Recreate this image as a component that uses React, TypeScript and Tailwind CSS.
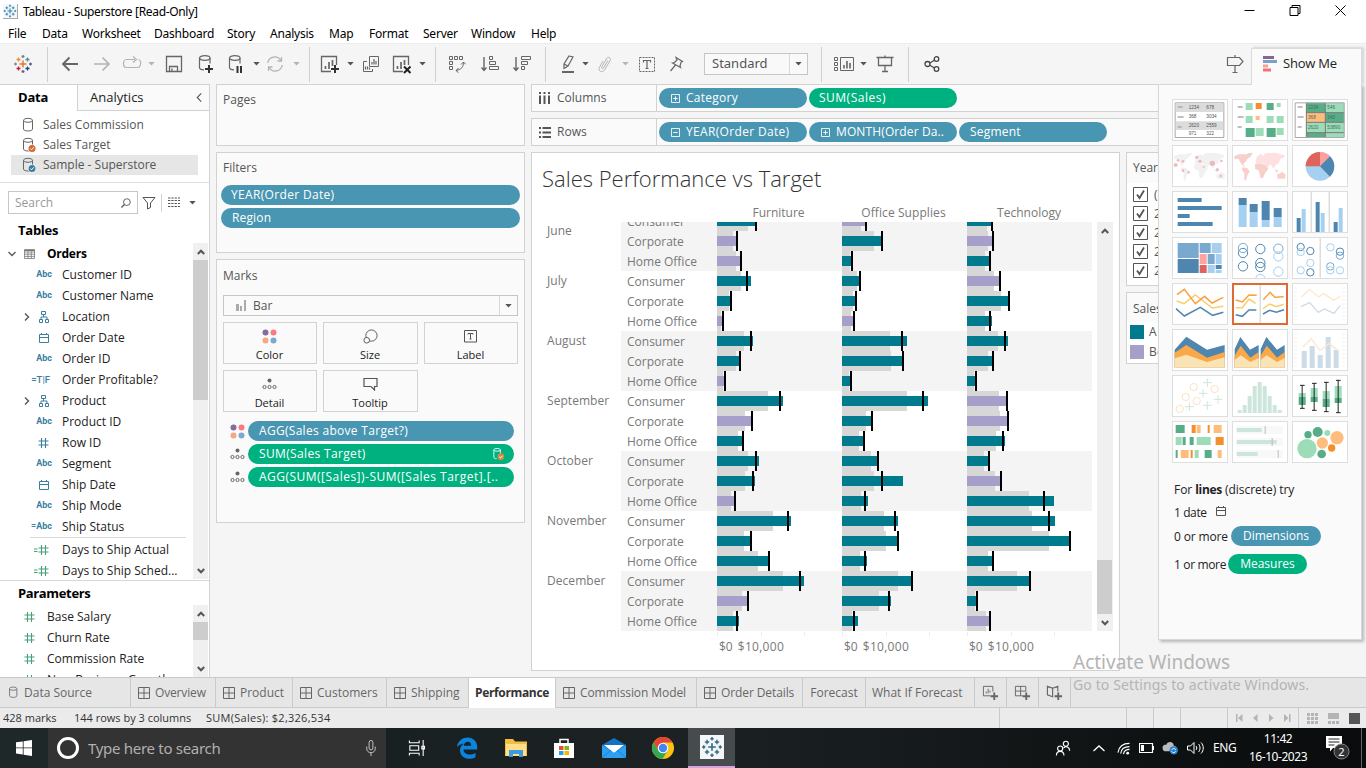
import React from "react";

const CARET = "M0 0h8l-4 4.5z";

function Caret({ className = "" }: { className?: string }) {
  return (
    <svg viewBox="0 0 8 5" className={`h-[4px] w-[7px] shrink-0 ${className}`}>
      <path d={CARET} fill="currentColor" />
    </svg>
  );
}

function TableauLogo({ className = "", mono }: { className?: string; mono?: string }) {
  const c = (x: string) => mono ?? x;
  return (
    <svg viewBox="0 0 20 20" className={className} fill="none" strokeWidth="1.3">
      <path d="M10 6.5v7M6.5 10h7" stroke={c("#e8762c")} strokeWidth="1.5" />
      <path d="M5.5 3.5v4M3.5 5.5h4" stroke={c("#eb912c")} />
      <path d="M14.5 3.5v4M12.5 5.5h4" stroke={c("#59879b")} />
      <path d="M5.5 12.5v4M3.5 14.5h4" stroke={c("#c72035")} />
      <path d="M14.5 12.5v4M12.5 14.5h4" stroke={c("#1f447e")} />
      <path d="M10 1v3M8.5 2.5h3" stroke={c("#5b879b")} />
      <path d="M10 16v3M8.5 17.5h3" stroke={c("#5c6692")} />
      <path d="M2.5 8.5v3M1 10h3" stroke={c("#7199a6")} />
      <path d="M17.5 8.5v3M16 10h3" stroke={c("#5c6692")} />
    </svg>
  );
}

function Cylinder({ className = "", badge }: { className?: string; badge?: string }) {
  return (
    <svg viewBox="0 0 14 16" className={className} fill="none">
      <path d="M1.5 3.5v8.6c0 1.1 2 1.9 4.5 1.9s4.500-.8 4.500-1.900V3.500" stroke="#666" />
      <ellipse cx="6" cy="3.300" rx="4.500" ry="2" stroke="#666" />
      {badge && (
        <g>
          <circle cx="10" cy="11.500" r="4" fill="#fff" />
          <circle cx="10" cy="11.500" r="3.500" fill={badge} />
          <path d="M8.300 11.500l1.300 1.300 2.200-2.500" stroke="#fff" />
        </g>
      )}
    </svg>
  );
}

/* ---------- title bar, menu and toolbar ---------- */

function TitleBar() {
  return (
    <div className="flex h-[22px] shrink-0 items-center bg-white">
      <div className="ml-[3px] flex h-[15px] w-[15px] items-center justify-center border-r border-b border-[#aaa] bg-[#f4f8fa]">
        <TableauLogo className="h-[14px] w-[14px]" mono="#2f80a8" />
      </div>
      <span className="ml-[5px] pt-[2px] text-[12px] tracking-[-0.33px] whitespace-pre text-black">Tableau - Superstore [Read-Only]</span>
      <svg viewBox="0 0 110 14" className="ml-auto mr-[17px] h-[14px] w-[110px]" fill="none" stroke="#000">
        <path d="M5.500 6.500h10" />
        <path d="M51 3.500h8v8h-8zM53 3.500v-2h8v8h-2" />
        <path d="M96.500 1.500l10 10M106.500 1.500l-10 10" />
      </svg>
    </div>
  );
}

function MenuBar() {
  return (
    <div className="flex h-[21px] shrink-0 items-center bg-white pt-[2px] pl-[8px] text-[12px] tracking-[-0.22px] text-black">
      <span className="w-[34px]">File</span>
      <span className="w-[40px]">Data</span>
      <span className="w-[72px]">Worksheet</span>
      <span className="w-[73px]">Dashboard</span>
      <span className="w-[43px]">Story</span>
      <span className="w-[59px]">Analysis</span>
      <span className="w-[40px]">Map</span>
      <span className="w-[54px]">Format</span>
      <span className="w-[48px]">Server</span>
      <span className="w-[60px]">Window</span>
      <span>Help</span>
    </div>
  );
}

function Sep({ className = "" }: { className?: string }) {
  return <div className={`h-[35px] w-px shrink-0 bg-[#d0d0d0] ${className}`} />;
}

function Ico({ className, box = "0 0 18 18", children }: { className: string; box?: string; children: React.ReactNode }) {
  return (
    <svg viewBox={box} className={`shrink-0 ${className}`} fill="none" stroke="#666" strokeWidth="1">
      {children}
    </svg>
  );
}

function Toolbar() {
  return (
    <div className="flex h-[41px] shrink-0 items-center border-t border-[#ececec] bg-[#f5f5f5]">
      <TableauLogo className="ml-[13px] h-[20px] w-[20px] shrink-0" />
      <Sep className="ml-[14px]" />
      <Ico className="ml-[13px] h-[18px] w-[18px]"><path d="M17 9H2M8.500 2.500L2 9l6.500 6.500" strokeWidth="1.900" /></Ico>
      <Ico className="ml-[14px] h-[18px] w-[18px]"><path d="M1 9h15M9.500 2.500L16 9l-6.500 6.500" stroke="#b4b4b4" strokeWidth="1.700" /></Ico>
      <Ico className="ml-[11px] h-[18px] w-[20px]" box="0 0 20 18"><path d="M13 4.500H4.500c-4 0-4 8 0 8h11c4 0 4-8 1-8M11 1.500l3.500 3-3.500 3" stroke="#b4b4b4" strokeWidth="1.200" /></Ico>
      <Caret className="ml-[6px] text-[#b4b4b4]" />
      <Ico className="ml-[10px] h-[18px] w-[18px]"><path d="M1.500 1.500h15v15h-15zM4.500 16.500v-5h8v5M7 13.500v3" strokeWidth="1.300" /></Ico>
      <Ico className="ml-[14px] h-[20px] w-[18px]" box="0 0 18 20">
        <path d="M2.500 4v9.500c0 1.500 2 2.300 4.500 2.300M13 9.500V4" strokeWidth="1.200" />
        <ellipse cx="7.750" cy="4" rx="5.250" ry="2.300" strokeWidth="1.200" />
        <path d="M12 11v8M8 15h8" stroke="#333" strokeWidth="2" />
      </Ico>
      <Ico className="ml-[12px] h-[20px] w-[18px]" box="0 0 18 20">
        <path d="M2.500 4v9.500c0 1.500 2 2.300 4.500 2.300M13 9.500V4" strokeWidth="1.200" />
        <ellipse cx="7.750" cy="4" rx="5.250" ry="2.300" strokeWidth="1.200" />
        <path d="M10.500 12v7M14 12v7" stroke="#333" strokeWidth="2" />
      </Ico>
      <Caret className="ml-[8px] text-[#555]" />
      <Ico className="ml-[6px] h-[18px] w-[18px]">
        <path d="M1.800 8a7 7 0 0 1 13-2.500M16.200 10a7 7 0 0 1-13 2.500M15.500 2v4h-4M2.500 16v-4h4" stroke="#b4b4b4" strokeWidth="1.300" />
      </Ico>
      <Caret className="ml-[9px] text-[#b4b4b4]" />
      <Sep className="ml-[9px]" />
      <Ico className="ml-[10px] h-[20px] w-[20px]" box="0 0 20 20">
        <path d="M11 17.500H1.500v-15h15V11" strokeWidth="1.300" />
        <path d="M5.500 15v-3M9 15V8M12.500 12V6" strokeWidth="1.700" />
        <path d="M15 11v8M11 15h8" stroke="#333" strokeWidth="2" />
      </Ico>
      <Caret className="ml-[7px] text-[#555]" />
      <Ico className="ml-[8px] h-[18px] w-[18px]">
        <path d="M7.500 1.500h9v10h-9zM5 6.500H1.500v10h9V14" />
        <path d="M10 9.500V7M12 9.500V4M14 9.500V6M3.500 14.500v-3M5.500 14.500v-3M7.500 14.500v-2" strokeWidth="1.200" />
      </Ico>
      <Ico className="ml-[12px] h-[20px] w-[20px]" box="0 0 20 20">
        <path d="M11 17.500H1.500v-15h15V11" strokeWidth="1.300" />
        <path d="M5.500 15v-3M9 15V8M12.500 11V6" strokeWidth="1.700" />
        <path d="M12 12.500l6.500 6.500M18.500 12.500L12 19" stroke="#222" strokeWidth="2" />
      </Ico>
      <Caret className="ml-[7px] text-[#555]" />
      <Sep className="ml-[9px]" />
      <Ico className="ml-[12px] h-[18px] w-[18px]">
        <path d="M1.500 1.500h3v3h-3zM6.500 1.500h3v3h-3zM11.500 1.500h3v3h-3zM1.500 6.500h3v3h-3zM1.500 11.500h3v3h-3z" />
        <path d="M15.500 7c0 5-2 7.500-7.500 8.500M13 9.500L15.500 7 18 9.500M10.500 13L8 15.500l2.500 2.300" />
      </Ico>
      <Ico className="ml-[15px] h-[18px] w-[18px]">
        <path d="M3 2v13M.5 12.500L3 15.500l2.500-3" strokeWidth="1.400" />
        <path d="M8.500 1.500h3v3h-3zM8.500 6.500h6v3h-6zM8.500 11.500h9v3h-9z" />
      </Ico>
      <Ico className="ml-[14px] h-[18px] w-[18px]">
        <path d="M3 2v13M.5 12.500L3 15.500l2.500-3" strokeWidth="1.400" />
        <path d="M8.500 1.500h9v3h-9zM8.500 6.500h6v3h-6zM8.500 11.500h3v3h-3z" />
      </Ico>
      <Sep className="ml-[14px]" />
      <Ico className="ml-[14px] h-[20px] w-[16px]" box="0 0 16 20">
        <path d="M9 2l4 1-5 9-4 2.500V10zM4 10l4 2" strokeWidth="1.200" />
        <path d="M2 18h12" strokeWidth="2" />
      </Ico>
      <Caret className="ml-[6px] text-[#555]" />
      <Ico className="ml-[8px] h-[18px] w-[16px]" box="0 0 16 18">
        <path d="M11 5.500L6.500 13c-.8 1.300-2.500.5-1.800-.9l5-8.600c1.500-2.500 4.800-.5 3.500 1.900L7.500 15c-2.500 3.500-7 1-5-2.800L6 6" stroke="#b4b4b4" />
      </Ico>
      <Caret className="ml-[9px] text-[#b4b4b4]" />
      <Ico className="ml-[9px] h-[18px] w-[18px]">
        <path d="M1.500 2.500h15v14h-15z" strokeDasharray="2 1" />
        <path d="M5.500 7.500v-2h7v2M9 5.500v8M7.500 13.500h3" strokeWidth="1.200" />
      </Ico>
      <Ico className="ml-[13px] h-[18px] w-[16px]" box="0 0 16 18">
        <path d="M7 2.500l6.500 4-1.500.8-1 3.700.5 1.500L3.500 8l2-.5L8 5zM6.500 10L1.500 16" strokeWidth="1.200" />
      </Ico>
      <div className="ml-[19px] flex h-[22px] w-[104px] shrink-0 items-center border border-[#c6c6c6] bg-[#f9f9f9] text-[13px] text-[#555]">
        <span className="flex-1 pl-[7px] font-['Noto_Sans']">Standard</span>
        <span className="flex h-full w-[18px] items-center justify-center border-l border-[#d8d8d8]"><Caret className="text-[#555]" /></span>
      </div>
      <Sep className="ml-[13px]" />
      <Ico className="ml-[12px] h-[18px] w-[20px]" box="0 0 20 18">
        <path d="M.5 2.500h3v3h-3zM.5 7.500h3v3h-3zM.5 12.500h3v3h-3zM6.500 2.500h13v13h-13z" />
        <path d="M10 13.500V10M13 13.500V6M16 13.500V8" strokeWidth="1.600" />
      </Ico>
      <Caret className="ml-[6px] text-[#555]" />
      <Ico className="ml-[9px] h-[18px] w-[18px]">
        <path d="M.5 2.500h17M2.500 2.500v8h13v-8M9 10.500v6M6 16.500h6M9 .5v2" strokeWidth="1.300" />
      </Ico>
      <Sep className="ml-[14px]" />
      <Ico className="ml-[15px] h-[18px] w-[16px]" box="0 0 16 18">
        <circle cx="3.500" cy="9" r="2.500" strokeWidth="1.300" stroke="#444" />
        <circle cx="12.500" cy="4" r="2.300" strokeWidth="1.300" stroke="#444" />
        <circle cx="12.500" cy="14" r="2.300" strokeWidth="1.300" stroke="#444" />
        <path d="M5.800 8l4.600-2.700M5.800 10.200l4.600 2.700" strokeWidth="1.200" stroke="#444" />
      </Ico>
      <Ico className="ml-[286px] h-[20px] w-[18px]" box="0 0 18 20">
        <path d="M1.500 3.500h12l3.500 4-3.500 4h-12zM9 1v2.500M9 11.500v7M6.500 18.500h5" strokeWidth="1.200" />
      </Ico>
      <div className="relative z-20 -mb-[1px] ml-[7px] flex h-[37px] w-[111px] shrink-0 items-center self-end border border-b-0 border-[#dcdcdc] bg-[#fafafa] pb-[6px] shadow-[2px_-1px_2px_rgba(0,0,0,0.12)]">
        <svg viewBox="0 0 16 16" className="ml-[10px] h-[16px] w-[16px]">
          <path d="M1 0h11v3H1z" fill="#876694" />
          <path d="M1 4h14v3H1z" fill="#79a2cb" />
          <path d="M1 8.500h5v3H1z" fill="#f3a582" />
          <path d="M1 12.500h8v3H1z" fill="#f76c80" />
        </svg>
        <span className="ml-[5px] font-['Open_Sans'] text-[13px] tracking-[-0.2px] text-[#222]">Show Me</span>
      </div>
    </div>
  );
}

/* ---------- data pane ---------- */

type FieldKind = "abc" | "geo" | "date" | "tf" | "num" | "eqabc" | "eqnum";

function FieldIcon({ kind }: { kind: FieldKind }) {
  const blue = "#3a7f9f";
  const green = "#45a179";
  if (kind === "abc" || kind === "eqabc") {
    return (
      <span className="pt-[1px] font-['Roboto'] text-[9px] font-bold text-[#3a7f9f]">
        {kind === "eqabc" ? "=Abc" : "Abc"}
      </span>
    );
  }
  if (kind === "tf") return <span className="pt-[1px] pr-[2px] font-['Roboto'] text-[9.500px] font-medium text-[#3a7f9f]">=T|F</span>;
  if (kind === "geo") {
    return (
      <svg viewBox="0 0 12 12" className="mr-[2px] h-[12px] w-[12px] shrink-0" fill="none" stroke={blue}>
        <path d="M3.500.500h4v3h-4zM1.500 8.500h3v3h-3zM7.500 8.500h3v3h-3zM5.500 3.500V6M3 8.500V6h6v2.500" />
      </svg>
    );
  }
  if (kind === "date") {
    return (
      <svg viewBox="0 0 12 12" className="mr-[2px] h-[12px] w-[12px] shrink-0" fill="none" stroke={blue}>
        <path d="M1.500 2.500h9v8h-9zM1.500 5.500h9M3.500 1v1.500M8.500 1v1.500" />
      </svg>
    );
  }
  return <Hash eq={kind === "eqnum"} color={kind === "num" ? blue : green} />;
}

function Hash({ eq, color }: { eq?: boolean; color: string }) {
  return (
    <svg viewBox="0 0 15 12" className="mr-[3px] h-[12px] w-[15px] shrink-0" fill="none" stroke={color}>
      <path d="M7.500 1v10M11.500 1v10M4.500 4h10M4.500 8h10" strokeWidth="1.100" />
      {eq && <path d="M0 5h3.500M0 7.500h3.500" />}
    </svg>
  );
}

const FIELDS: { kind: FieldKind; name: string; open?: boolean }[] = [
  { kind: "abc", name: "Customer ID" },
  { kind: "abc", name: "Customer Name" },
  { kind: "geo", name: "Location", open: true },
  { kind: "date", name: "Order Date" },
  { kind: "abc", name: "Order ID" },
  { kind: "tf", name: "Order Profitable?" },
  { kind: "geo", name: "Product", open: true },
  { kind: "abc", name: "Product ID" },
  { kind: "num", name: "Row ID" },
  { kind: "abc", name: "Segment" },
  { kind: "date", name: "Ship Date" },
  { kind: "abc", name: "Ship Mode" },
  { kind: "eqabc", name: "Ship Status" },
];

function Field({ kind, name, open }: { kind: FieldKind; name: string; open?: boolean }) {
  return (
    <div className="flex h-[21px] items-center text-[12px] text-[#222]">
      <span className="flex w-[32px] justify-end pr-[2px]">
        {open && (
          <svg viewBox="0 0 6 8" className="h-[8px] w-[6px]" fill="none" stroke="#555" strokeWidth="1.400"><path d="M1 .5L4.500 4 1 7.500" /></svg>
        )}
      </span>
      <span className="flex w-[20px] items-center justify-end whitespace-nowrap"><FieldIcon kind={kind} /></span>
      <span className="pt-[1px] pl-[10px] whitespace-nowrap">{name}</span>
    </div>
  );
}

function Arrow({ up }: { up?: boolean }) {
  return (
    <svg viewBox="0 0 8 6" className="h-[6px] w-[8px]" fill="none" stroke="#555" strokeWidth="2">
      {up ? <path d="M.8 5L4 1.700 7.200 5" /> : <path d="M.8 1L4 4.300 7.200 1" />}
    </svg>
  );
}

function DataPane() {
  return (
    <div className="flex w-[210px] shrink-0 flex-col overflow-hidden border-t border-r border-[#d2d2d2] bg-white font-['Open_Sans']">
      <div className="flex h-[26px] shrink-0">
        <div className="flex w-[77px] items-center pl-[18px] text-[13px] font-bold tracking-[-0.2px] text-black">Data</div>
        <div className="flex flex-1 items-center border-b border-l border-[#d2d2d2] bg-[#fafafa] pl-[12px] text-[13px] text-[#222]">
          Analytics
          <svg viewBox="0 0 6 10" className="ml-auto mr-[7px] h-[9px] w-[6px]" fill="none" stroke="#555" strokeWidth="1.200"><path d="M5.500.5L1 5l4.500 4.500" /></svg>
        </div>
      </div>
      <div className="mt-[4px] flex h-[68px] shrink-0 flex-col border-b border-[#e0e0e0] text-[12px] text-[#555]">
        <div className="flex h-[20px] items-center pl-[22px]"><Cylinder className="h-[16px] w-[14px]" /><span className="ml-[7px]">Sales Commission</span></div>
        <div className="flex h-[20px] items-center pl-[22px]"><Cylinder className="h-[16px] w-[14px]" badge="#d5692f" /><span className="ml-[7px]">Sales Target</span></div>
        <div className="mr-[11px] ml-[11px] flex h-[20px] items-center bg-[#e6e6e6] pl-[11px]"><Cylinder className="h-[16px] w-[14px]" badge="#3a7f9f" /><span className="ml-[7px]">Sample - Superstore</span></div>
      </div>
      <div className="mt-[8px] flex h-[23px] shrink-0 items-center pl-[8px]">
        <div className="flex h-[23px] w-[130px] items-center border border-[#c6c6c6] pl-[6px] text-[12px] text-[#999]">
          Search
          <svg viewBox="0 0 11 11" className="ml-auto mr-[6px] h-[10px] w-[10px]" fill="none" stroke="#555"><circle cx="6.500" cy="4.500" r="3.700" /><path d="M3.800 7.200L.5 10.500" strokeWidth="1.400" /></svg>
        </div>
        <svg viewBox="0 0 14 14" className="ml-[4px] h-[14px] w-[14px]" fill="none" stroke="#555"><path d="M1 1.500h12L8.500 7v4.500l-3 1.500V7z" /></svg>
        <div className="ml-[5px] h-[18px] w-px bg-[#d2d2d2]" />
        <svg viewBox="0 0 12 11" className="ml-[6px] h-[11px] w-[12px]" fill="none" stroke="#555" strokeWidth="1.200"><path d="M0 1h12M0 3.500h12M0 6.500h12M0 9.500h12" strokeDasharray="2.300 1" /></svg>
        <Caret className="ml-[9px] text-[#555]" />
      </div>
      <div className="mt-[6px] h-[21px] shrink-0 pl-[18px] text-[13px] leading-[21px] font-bold tracking-[-0.25px] text-black">Tables</div>
      <div className="mt-[2px] flex h-[338px] shrink-0 overflow-hidden border-b border-[#d8d8d8]">
        <div className="w-[193px] shrink-0">
          <div className="flex h-[21px] items-center pl-[8px] text-[12px] font-bold tracking-[-0.25px] text-black">
            <svg viewBox="0 0 8 6" className="h-[6px] w-[8px]" fill="none" stroke="#555" strokeWidth="1.300"><path d="M.5 1L4 4.500 7.500 1" /></svg>
            <svg viewBox="0 0 11 10" className="ml-[8px] h-[10px] w-[11px]" fill="none" stroke="#777"><path d="M.5.500h10v9H.5zM.5 3h10M.5 5.200h10M.5 7.400h10M4 2.500v7M7.300 2.500v7" strokeWidth=".8" /><path d="M.5 1.500h10" /></svg>
            <span className="ml-[12px]">Orders</span>
          </div>
          {FIELDS.map((f) => (
            <Field key={f.name} {...f} />
          ))}
          <div className="ml-[30px] h-px w-[156px] bg-[#dadada]" />
          <div className="pt-[1px]">
            <Field kind="eqnum" name="Days to Ship Actual" />
            <Field kind="eqnum" name="Days to Ship Sched..." />
          </div>
        </div>
        <div className="flex h-[336px] w-[15px] flex-col items-center bg-[#f0f0f0]">
          <div className="flex h-[17px] items-center"><Arrow up /></div>
          <div className="h-[140px] w-full bg-[#cdcdcd]" />
          <div className="mt-auto flex h-[17px] items-center"><Arrow /></div>
        </div>
      </div>
      <div className="h-[24px] shrink-0 pl-[18px] text-[13px] leading-[24px] font-bold tracking-[-0.35px] text-black">Parameters</div>
      <div className="flex min-h-0 flex-1 overflow-hidden">
        <div className="w-[193px] shrink-0 pt-[1px] text-[12px] text-[#222]">
          {["Base Salary", "Churn Rate", "Commission Rate", "New Business Growth"].map((p) => (
            <div key={p} className="flex h-[21px] shrink-0 items-center pl-[20px]">
              <Hash color="#45a179" /><span className="ml-[9px]">{p}</span>
            </div>
          ))}
        </div>
        <div className="flex h-full w-[15px] flex-col items-center bg-[#f0f0f0]">
          <div className="flex h-[17px] items-center"><Arrow up /></div>
          <div className="h-[18px] w-full bg-[#cdcdcd]" />
          <div className="mt-auto flex h-[17px] items-center"><Arrow /></div>
        </div>
      </div>
    </div>
  );
}

/* ---------- cards ---------- */

function Pill({ text, green, className = "", icon }: { text: string; green?: boolean; className?: string; icon?: "plus" | "minus" }) {
  return (
    <div className={`flex h-[20px] items-center rounded-full text-[12px] whitespace-nowrap text-white ${green ? "bg-[#00b180]" : "bg-[#4996b2]"} ${className}`}>
      {icon && (
        <svg viewBox="0 0 10 10" className="mr-[6px] h-[9px] w-[9px]" fill="none" stroke="#fff">
          <path d="M.5.500h9v9h-9zM2.500 5h5" />
          {icon === "plus" && <path d="M5 2.500v5" />}
        </svg>
      )}
      {text}
    </div>
  );
}

function ColorDots() {
  return (
    <svg viewBox="0 0 15 15" className="h-[15px] w-[15px]">
      <circle cx="3.500" cy="3.500" r="3" fill="#876d9c" />
      <circle cx="11.500" cy="3.500" r="3" fill="#f77a85" />
      <circle cx="3.500" cy="11.500" r="3" fill="#f3a782" />
      <circle cx="11.500" cy="11.500" r="3" fill="#80a8cf" />
    </svg>
  );
}

function DetailDots() {
  return (
    <svg viewBox="0 0 15 12" className="h-[12px] w-[15px]" fill="none" stroke="#666">
      <circle cx="7.500" cy="2.500" r="2" fill="#666" stroke="none" />
      <circle cx="2.500" cy="9" r="1.600" />
      <circle cx="7.500" cy="9" r="1.600" />
      <circle cx="12.500" cy="9" r="1.600" />
    </svg>
  );
}

function MarkButton({ label, children }: { label: string; children: React.ReactNode }) {
  return (
    <div className="flex h-[42px] flex-col items-center border border-[#d2d2d2] pr-[1px] text-[11px] text-[#222]">
      <div className="flex h-[26px] items-center">{children}</div>
      <span className="leading-[12px]">{label}</span>
    </div>
  );
}

function Cards() {
  return (
    <div className="ml-[6px] flex w-[309px] shrink-0 flex-col gap-[6px] font-['Open_Sans'] text-[12px] text-[#555]">
      <div className="h-[62px] border border-[#d2d2d2] bg-[#fafafa] px-[6px] pt-[6px] leading-[17px]">Pages</div>
      <div className="h-[101px] border border-[#d2d2d2] bg-[#fafafa] px-[4px] pt-[6px]">
        <div className="px-[2px] leading-[17px]">Filters</div>
        <div className="mt-[9px] flex flex-col gap-[3px]">
          <Pill text="YEAR(Order Date)" className="pl-[10px] tracking-[0.33px]" />
          <Pill text="Region" className="pl-[11px] tracking-[0.15px]" />
        </div>
      </div>
      <div className="h-[264px] border border-[#d2d2d2] bg-[#fafafa] px-[6px] pt-[7px]">
        <div className="leading-[17px]">Marks</div>
        <div className="mt-[11px] flex h-[21px] items-center border border-[#c6c6c6]">
          <svg viewBox="0 0 12 12" className="ml-[11px] h-[12px] w-[12px]"><path d="M1 4h3v7H1zM5 6h2v5H5zM9 0h2v11H9z" fill="#aaa" /></svg>
          <span className="ml-[6px] text-[12px]">Bar</span>
          <span className="ml-auto flex h-full w-[18px] items-center justify-center border-l border-[#d8d8d8]"><Caret className="text-[#555]" /></span>
        </div>
        <div className="mt-[6px] grid grid-cols-[94px_95px_94px] gap-[6px]">
          <MarkButton label="Color"><ColorDots /></MarkButton>
          <MarkButton label="Size">
            <svg viewBox="0 0 16 16" className="h-[15px] w-[15px]" fill="none" stroke="#555"><circle cx="9" cy="7" r="6" /><circle cx="4" cy="12" r="3" fill="#fafafa" /></svg>
          </MarkButton>
          <MarkButton label="Label">
            <svg viewBox="0 0 13 13" className="h-[13px] w-[13px]" fill="none" stroke="#555"><path d="M.5.500h12v11.500H.5zM4 4.500V3.500h5v1M6.500 3.500v5.500M5.500 9h2" /></svg>
          </MarkButton>
          <MarkButton label="Detail"><DetailDots /></MarkButton>
          <MarkButton label="Tooltip">
            <svg viewBox="0 0 15 14" className="h-[14px] w-[15px]" fill="none" stroke="#555" strokeWidth="1.200"><path d="M1 1.500h13v8h-2.500v3.500L8 9.500H1z" /></svg>
          </MarkButton>
        </div>
        <div className="mt-[9px] flex flex-col gap-[3px] pr-[4px] pl-[7px]">
          <div className="flex items-center"><ColorDots /><Pill text="AGG(Sales above Target?)" className="ml-[3px] flex-1 pl-[11px] tracking-[0.3px]" /></div>
          <div className="flex items-center"><DetailDots />
            <div className="ml-[3px] flex h-[20px] flex-1 items-center rounded-full bg-[#00b180] pr-[9px] pl-[11px] tracking-[0.35px] text-white">
              SUM(Sales Target)
              <svg viewBox="0 0 14 15" className="ml-auto h-[14px] w-[13px]" fill="none" stroke="#dff"><path d="M2 3v8c0 1 1 1.500 3 1.600M9 7V3" /><ellipse cx="5.500" cy="3" rx="3.500" ry="1.500" /><circle cx="9.500" cy="10.500" r="3.700" fill="#cf8b45" stroke="none" /><path d="M7.800 10.500l1.400 1.300 2-2.300" stroke="#fff" /></svg>
            </div>
          </div>
          <div className="flex items-center"><DetailDots /><Pill green text="AGG(SUM([Sales])-SUM([Sales Target].[.." className="ml-[3px] flex-1 pl-[11px] tracking-[0.48px]" /></div>
        </div>
      </div>
    </div>
  );
}

/* ---------- worksheet view ---------- */

// Each mark: [bar length, target position, band length, below-target flag]
type Mark = [number, number, number, number];
const SEGMENTS = ["Consumer", "Corporate", "Home Office"];
const MONTHS: { name: string; rows: Mark[][] }[] = [
  { name: "June", rows: [
    [[39, 39, 31, 0], [24, 24, 19, 1], [25, 25, 20, 0]],
    [[20, 20, 16, 1], [40, 40, 32, 0], [26, 26, 21, 1]],
    [[24, 24, 19, 1], [10, 10, 8, 0], [23, 23, 18, 0]],
  ] },
  { name: "July", rows: [
    [[34, 30, 24, 0], [18, 18, 15, 0], [33, 33, 27, 1]],
    [[14, 14, 12, 0], [14, 14, 11, 0], [42, 42, 34, 0]],
    [[6, 6, 4, 1], [12, 12, 9, 1], [25, 23, 18, 0]],
  ] },
  { name: "August", rows: [
    [[36, 34, 27, 0], [65, 60, 48, 0], [41, 38, 31, 0]],
    [[23, 23, 19, 0], [61, 61, 49, 0], [26, 26, 21, 0]],
    [[8, 8, 6, 1], [9, 9, 7, 0], [9, 9, 7, 0]],
  ] },
  { name: "September", rows: [
    [[66, 63, 51, 0], [86, 81, 65, 0], [40, 40, 32, 1]],
    [[35, 35, 28, 1], [30, 30, 24, 0], [41, 41, 33, 1]],
    [[26, 26, 21, 0], [22, 22, 17, 0], [38, 36, 29, 0]],
  ] },
  { name: "October", rows: [
    [[42, 39, 31, 0], [36, 36, 29, 0], [22, 22, 17, 0]],
    [[38, 36, 28, 0], [61, 40, 32, 0], [34, 34, 28, 1]],
    [[18, 18, 14, 1], [26, 23, 19, 0], [87, 77, 62, 0]],
  ] },
  { name: "November", rows: [
    [[74, 71, 56, 0], [56, 53, 42, 0], [88, 82, 65, 0]],
    [[34, 34, 27, 0], [56, 56, 44, 0], [103, 103, 82, 0]],
    [[52, 52, 41, 0], [25, 23, 18, 0], [26, 26, 21, 0]],
  ] },
  { name: "December", rows: [
    [[87, 83, 66, 0], [70, 70, 56, 0], [63, 63, 50, 0]],
    [[31, 31, 25, 1], [49, 47, 37, 0], [10, 10, 8, 0]],
    [[22, 20, 16, 0], [16, 12, 10, 0], [23, 23, 19, 1]],
  ] },
];

function Chart() {
  return (
    <div className="flex flex-col">
      <div className="flex h-[29px] items-end pl-[184px] text-[12px] text-[#787878]">
        <span className="w-[125px] text-center leading-[19px]">Furniture</span>
        <span className="w-[125px] text-center leading-[19px] tracking-[0.08px]">Office Supplies</span>
        <span className="w-[125px] pl-[1px] text-center leading-[19px]">Technology</span>
      </div>
      <div className="flex h-[409px]">
        <div className="flex h-[409px] flex-col justify-end overflow-hidden text-[12px] text-[#787878]">
          {MONTHS.map((m, i) => (
            <div key={m.name} className="flex h-[60px] shrink-0">
              <div className={`w-[89px] pl-[15px] leading-[20px] tracking-[0.05px] ${i === 0 ? "pt-[10px]" : ""}`}>{m.name}</div>
              <div className={`w-[96px] pl-[6px] leading-[21px] ${i % 2 ? "bg-white" : "bg-[#f4f4f4]"}`}>
                {SEGMENTS.map((s) => (
                  <div key={s} className="h-[20px]">{s}</div>
                ))}
              </div>
              <svg viewBox="0 0 375 60" className={`h-[60px] w-[375px] ${i % 2 ? "bg-white" : "bg-[#f4f4f4]"}`} shapeRendering="crispEdges">
                {m.rows.map((row, r) =>
                  row.map(([bar, tick, band, below], c) => (
                    <g key={`${r}-${c}`} transform={`translate(${c * 125} ${r * 20})`}>
                      <rect width={band} height="20" fill="#d7d7d7" />
                      <rect y="5" width={bar} height="10" fill={below ? "#a59fca" : "#007b8e"} />
                      <rect x={tick - 1} width="2" height="20" fill="#000" />
                    </g>
                  ))
                )}
              </svg>
            </div>
          ))}
        </div>
        <div className="ml-[5px] flex h-[409px] w-[16px] flex-col items-center bg-[#f0f0f0]">
          <div className="flex h-[18px] items-center"><Arrow up /></div>
          <div className="mt-auto mr-[1px] h-[54px] w-[15px] bg-[#cdcdcd]" />
          <div className="flex h-[17px] items-center"><Arrow /></div>
        </div>
      </div>
      <div className="flex pl-[185px] text-[12px] text-[#787878]">
        {[0, 1, 2].map((i) => (
          <div key={i} className="w-[125px]">
            <svg viewBox="0 0 125 5" className="h-[5px] w-[125px]" stroke="#ececec"><path d="M.5 1v4M44.500 1v4M87.500 1v4" /></svg>
            <div className="pt-[1px] pl-[2px] leading-[20px] whitespace-pre"><span className="mr-[5px]">$0</span><span className="tracking-[0.3px]">$10,000</span></div>
          </div>
        ))}
      </div>
    </div>
  );
}

function Worksheet() {
  return (
    <div className="ml-[6px] w-[628px] shrink-0 overflow-hidden font-['Open_Sans'] text-[12px] text-[#555]">
      <div className="flex w-[640px] flex-col gap-[6px]">
        <div className="flex h-[28px] border border-[#d2d2d2] bg-[#fafafa]">
          <div className="flex w-[125px] items-center border-r border-[#d2d2d2] pl-[7px]">
            <svg viewBox="0 0 11 12" className="h-[12px] w-[11px]" stroke="#555" strokeWidth="2"><path d="M1 0v2M5.500 0v2M10 0v2M1 3.500V12M5.500 3.500V12M10 3.500V12" /></svg>
            <span className="ml-[7px]">Columns</span>
          </div>
          <div className="flex items-center gap-[2px] pl-[2px]">
            <Pill icon="plus" text="Category" className="w-[148px] pl-[12px] tracking-[0.25px]" />
            <Pill green text="SUM(Sales)" className="w-[148px] pl-[10px] tracking-[0.5px]" />
          </div>
        </div>
        <div className="flex h-[28px] border border-[#d2d2d2] bg-[#fafafa]">
          <div className="flex w-[125px] items-center border-r border-[#d2d2d2] pl-[7px]">
            <svg viewBox="0 0 12 11" className="h-[11px] w-[12px]" stroke="#555" strokeWidth="2"><path d="M0 1h2M0 5.500h2M0 10h2M3.500 1H12M3.500 5.500H12M3.500 10H12" /></svg>
            <span className="ml-[6px]">Rows</span>
          </div>
          <div className="flex items-center gap-[2px] pl-[2px]">
            <Pill icon="minus" text="YEAR(Order Date)" className="w-[148px] pl-[12px] tracking-[0.33px]" />
            <Pill icon="plus" text="MONTH(Order Da.." className="w-[148px] pl-[12px] tracking-[0.12px]" />
            <Pill text="Segment" className="w-[148px] pl-[11px] tracking-[0.2px]" />
          </div>
        </div>
        <div className="flex gap-[6px]">
          <div className="h-[519px] w-[589px] border border-[#d2d2d2] bg-white">
            <div className="h-[40px] pl-[10px] font-['Open_Sans'] text-[22px] leading-[51px] font-light text-[#333]">Sales Performance vs Target</div>
            <Chart />
          </div>
          <div className="flex w-[45px] flex-col gap-[6px] overflow-hidden whitespace-nowrap">
            <div className="h-[134px] w-[80px] border border-[#d2d2d2] bg-white">
              <div className="h-[30px] bg-[#fafafa] pl-[6px] leading-[30px]">Year of</div>
              <div className="flex flex-col gap-[4px] pt-[4px] pl-[6px]">
                {["(All)", "2020", "2021", "2022", "2023"].map((y) => (
                  <div key={y} className="flex h-[15px] items-center">
                    <svg viewBox="0 0 15 15" className="h-[15px] w-[15px]" fill="none" stroke="#555"><path d="M.5.500h14v14H.5z" /><path d="M4 7.500l2.500 3.500L11 3.500" strokeWidth="1.800" /></svg>
                    <span className="ml-[6px] tracking-[1px]">{y}</span>
                  </div>
                ))}
              </div>
            </div>
            <div className="h-[72px] w-[120px] border border-[#d2d2d2] bg-white">
              <div className="h-[29px] bg-[#fafafa] pl-[6px] leading-[31px]">Sales above</div>
              <div className="flex h-[20px] items-center pl-[3px] tracking-[0.8px]"><span className="mr-[5px] h-[14px] w-[14px] bg-[#007b8e]" />Above</div>
              <div className="flex h-[20px] items-center pl-[3px] tracking-[0.3px]"><span className="mr-[5px] h-[14px] w-[14px] bg-[#a59fca]" />Below</div>
            </div>
          </div>
        </div>
      </div>
    </div>
  );
}

/* ---------- show me panel ---------- */

const D = "#4f86b0";
const L = "#a5d0f0";
const G = "#56ad88";
const P = "#9ddcb8";
const O = "#f48f2b";
const Y = "#ffbd7d";

function Circles({ list, r = 14 }: { list: [number, number, string][]; r?: number }) {
  return (
    <g fill="none" strokeWidth="3">
      {list.map(([x, y, c], i) => (
        <circle key={i} cx={x} cy={y} r={r} stroke={c} />
      ))}
    </g>
  );
}

function Continents({ a, b }: { a: string; b: string }) {
  return (
    <g>
      <path d="M4 33l14-6 22 0 8-3 6 8-12 10-4 8-8 6 6 8-8-4-8-12-4-8-12 2z" fill={a} />
      <path d="M44 24l16-2-6 10-6 2z" fill={a} />
      <path d="M28 66l14 2 8 10-6 10-6 18-4-2 0-20-8-12z" fill={a} />
      <path d="M66 56l18-2 14 6 8 10-10 14-6 14-8 0-4-22-12-6z" fill={a} />
      <path d="M68 46l4-12 12-10 4 8 10-8 28-2 30 8-4 8-10 2-4 14-10 4-6 12-10-14-8 12-10-12-10-4-14 4z" fill={b} />
      <path d="M132 88l16-8 10 8-2 12-12 0-10 0z" fill={a} />
      <path d="M124 70l12 6-4 6z" fill={a} />
    </g>
  );
}

// Drawings use one shared sheet: columns start at 67, 247, 427; rows start at 27 and repeat every 138.
const DRAWINGS: React.ReactNode[] = [
  <g key="text">
    <path d="M76.500 38.500h146v104h-146z" fill="#fff" stroke="#a8a8a8" strokeWidth="3" />
    <path d="M78 40h143v26H78zM78 94h143v26H78z" fill="#dcdcdc" />
    <path d="M84 51h15M84 81h18M84 111h12" stroke="#aaa" strokeWidth="5" />
    <g fontSize="14" fill="#555" fontFamily="Liberation Sans">
      <text x="117" y="57">1234</text><text x="170" y="57">678</text>
      <text x="117" y="85">368</text><text x="170" y="85">3034</text>
      <text x="117" y="112">2620</text><text x="170" y="112">2559</text>
      <text x="117" y="136">971</text><text x="170" y="136">322</text>
    </g>
  </g>,
  <g key="heat">
    <path d="M264 51h15M264 81h18M264 111h12" stroke="#aaa" strokeWidth="5" />
    <path d="M288 39h21v21h-21zM381 39h12v12h-12zM288 78h21v21h-21zM351 78h21v21h-21zM381 78h21v21h-21zM318 114h24v24h-24zM381 114h21v21h-21z" fill={P} />
    <path d="M351 39h21v21h-21zM288 114h27v27h-27zM351 114h27v27h-27z" fill={G} />
    <path d="M318 39h18v18h-18z" fill={O} /><path d="M318 78h12v12h-12z" fill={Y} />
  </g>,
  <g key="highlight">
    <path d="M470 38h57v30h-57zM527 68h57v29h-57zM470 128h57v13h-57z" fill={G} />
    <path d="M527 38h57v30h-57zM470 97h114v31H470zM527 128h57v13h-57z" fill={P} />
    <path d="M470 68h57v29h-57z" fill={Y} />
    <path d="M470 38v103M527 38v103M470 68h114M470 97h114M470 128h114" stroke="#777" strokeWidth="3" />
    <path d="M436.500 38.500h147v104h-147z" fill="none" stroke="#a8a8a8" strokeWidth="3" />
    <path d="M444 51h15M444 81h18M444 111h12" stroke="#aaa" strokeWidth="5" />
    <g fontSize="14" fill="#4a6b5c" fontFamily="Liberation Sans">
      <text x="475" y="57">1234</text><text x="533" y="57">546</text><text x="475" y="87">368</text>
      <text x="533" y="87">340</text><text x="475" y="117">2620</text><text x="533" y="117">53890</text>
    </g>
  </g>,
  <g key="symbol">
    <g transform="translate(68 166)"><Continents a="#f1f1f1" b="#f1f1f1" /></g>
    <g fill="#edaeb0" opacity=".8"><circle cx="78" cy="225" r="6" /><circle cx="188" cy="220" r="8" /><circle cx="85" cy="211" r="4" /><circle cx="100" cy="214" r="4" /><circle cx="141" cy="202" r="5" /><circle cx="151" cy="214" r="5" /><circle cx="100" cy="242" r="4" /><circle cx="117" cy="247" r="4" /><circle cx="203" cy="239" r="5" /><circle cx="215" cy="213" r="4" /><circle cx="213" cy="258" r="4" /><circle cx="162" cy="231" r="3" /></g>
  </g>,
  <g key="map" transform="translate(250 166)"><Continents a="#f7cfcb" b="#ffe0e0" /></g>,
  <g key="pie">
    <circle cx="511" cy="229" r="43" fill={L} />
    <path d="M511 229V186a43 43 0 0 0-43 43z" fill="#e0625c" />
    <path d="M511 229V186a43 43 0 0 1 30 13z" fill="#ff9f9c" />
    <path d="M511 229l30-30a43 43 0 0 1 0 61z" fill={D} />
  </g>,
  <path key="hbar" d="M84 324h72v12H84zM84 348h132v12H84zM84 372h36v12H84zM84 396h105v12H84z" fill={D} />,
  <g key="stack">
    <path d="M267 345h24v66h-24zM300 366h24v45h-24zM336 390h24v21h-24zM372 381h24v30h-24z" fill={L} />
    <path d="M267 324h24v21h-24zM300 342h24v24h-24zM336 333h24v57h-24zM372 354h24v27h-24z" fill={D} />
  </g>,
  <g key="side">
    <path d="M484.500 306v120M538.500 306v120" stroke="#ccc" strokeWidth="3" />
    <path d="M441 384h12v42h-12zM498 336h12v90h-12zM552 396h12v30h-12z" fill={D} />
    <path d="M456 357h12v69h-12zM513 369h12v57h-12zM567 354h12v72h-12z" fill={L} />
  </g>,
  <g key="tree">
    <path d="M84 459h63v45H84zM150 459h33v30h-33zM174 492h21v30h-21z" fill="#7aa9d0" />
    <path d="M84 507h63v42H84zM198 525h18v12h-18z" fill={D} />
    <path d="M186 459h30v30h-30zM198 492h18v30h-18zM174 525h21v24h-21zM198 540h18v9h-18z" fill={L} />
    <path d="M150 492h21v30h-21z" fill="#ffa3a0" /><path d="M150 525h21v24h-21z" fill="#e0625c" />
  </g>,
  <Circles key="circ" list={[[280, 474, "#7aa9d0"], [280, 489, D], [280, 529, D], [332, 477, D], [332, 519, D], [332, 531, D], [332, 567, L], [386, 476, "#7aa9d0"], [386, 499, L], [386, 545, L]]} />,
  <g key="sidecirc">
    <path d="M511.500 445v118" stroke="#ccc" strokeWidth="3" />
    <Circles r={11} list={[[453, 471, D], [453, 486, L], [482, 483, D], [482, 519, L], [482, 547, D], [453, 541, L], [542, 472, L], [571, 485, D], [571, 497, "#7aa9d0"], [542, 529, "#7aa9d0"], [542, 541, L], [571, 541, L]]} />
  </g>,
  <g key="lines" fill="none" strokeWidth="4.500">
    <path d="M81 633l22 8 34-26 51 39 33-5" stroke="#f8ce6e" /><path d="M82 614l22-16 33 43 28-22 22 20 34-17" stroke="#fba23f" />
    <path d="M79 656l25 22 48-26 37 24 32-9" stroke={D} />
  </g>,
  <g key="dlines" fill="none" strokeWidth="4.500">
    <path d="M331.500 585v114" stroke="#ccc" strokeWidth="3" />
    <path d="M258 653l20 0 20-26 20 13M340 656l20-14 20 8 22-7" stroke="#f8ce6e" /><path d="M258 630l20 6 20-21 23 1M341 629l20-22 15 15 26-2" stroke="#fba23f" />
    <path d="M258 674l20 5 20-19 22 0M340 672l20-11 20 6 23-8" stroke={D} />
  </g>,
  <g key="dual" fill="none" strokeWidth="4">
    <path d="M455 622l25-24 26 23 16-10 30 20 20-12" stroke="#fde6cb" /><path d="M454 650l26-12 26 29 18-10 29 13 19-24" stroke="#cfdce8" />
    <path d="M438 593v97M582 593v97" stroke="#ddd" strokeWidth="8" strokeDasharray="2 10" />
  </g>,
  <g key="area">
    <path d="M75 779l35-39 62 39 53-14v68H75z" fill={D} /><path d="M75 788l35-23 62 38 53-17v47H75z" fill="#fba848" /><path d="M75 805l35-11 62 22 53-14v31H75z" fill="#fae3b5" />
  </g>,
  <g key="darea">
    <path d="M255 777l17-36 29 38 26-14v68h-72zM333 777l17-36 32 38 23-14v68h-72z" fill={D} />
    <path d="M255 797l18-30 29 36 25-17v47h-72zM333 797l18-30 31 36 23-17v47h-72z" fill="#fba848" />
    <path d="M255 810l18-14 29 20 25-12v29h-72zM333 810l18-14 31 20 23-12v29h-72z" fill="#fae3b5" />
  </g>,
  <g key="combo">
    <path d="M456 783h15v51h-15zM480 768h15v66h-15zM504 795h15v39h-15zM528 741h15v93h-15zM552 780h15v54h-15z" fill="#ccdbe8" />
    <path d="M460 771l25-25 26 36 27-21 28 21" stroke="#fde6cb" strokeWidth="4" fill="none" /><path d="M438 731v97M582 731v97" stroke="#ddd" strokeWidth="8" strokeDasharray="2 10" />
  </g>,
  <g key="scatter" fill="none" strokeWidth="3">
    <Circles r={11} list={[[132, 891, "#fde2c6"], [108, 921, "#fde2c6"], [141, 933, "#fde2c6"], [195, 897, "#fde2c6"], [90, 957, "#fde2c6"]]} />
    <path d="M160 878h26M173 865v26M147 910h26M160 897v26M192 928h26M205 915v26M106 950h26M119 937v26M160 946h26M173 933v26" stroke="#cce6dc" />
  </g>,
  <path key="histo" d="M264 960h12v9h-12zM279 945h12v24h-12zM294 918h12v51h-12zM309 888h12v81h-12zM324 876h12v93h-12zM339 888h12v81h-12zM354 918h12v51h-12zM369 945h12v24h-12zM384 960h12v9h-12z" fill="#cce6dc" />,
  <g key="box">
    <path d="M447 909h21v12h-21zM483 894h21v27h-21zM519 903h21v24h-21zM555 888h21v36h-21z" fill={P} />
    <path d="M447 921h21v24h-21zM483 921h21v15h-21zM519 927h21v24h-21zM555 924h21v15h-21z" fill={G} />
    <path d="M457.500 886v69M451 886h14M451 955h14M493.500 880v81M487 880h14M487 961h14M529.500 877v88M523 877h14M523 965h14M565.500 871v97M559 871h14M559 968h14" stroke="#222" strokeWidth="3" />
  </g>,
  <g key="gantt">
    <path d="M78 1005h27v24H78zM99 1041h9v24h-9zM120 1041h12v24h-12zM78 1080h6v24h-6zM165 1080h21v24h-21z" fill={G} />
    <path d="M78 1041h18v24H78zM141 1041h42v24h-42zM135 1080h12v24h-12z" fill={P} />
    <path d="M126 1005h12v24h-12zM174 1005h6v24h-6zM198 1041h24v24h-24zM123 1080h6v24h-6z" fill={O} />
    <path d="M141 1005h12v24h-12zM192 1005h24v24h-24zM93 1080h24v24h-24zM204 1080h12v24h-12z" fill={Y} />
  </g>,
  <g key="bullet">
    <path d="M261 1008h138v24H261zM261 1044h138v24H261zM261 1080h138v24H261z" fill="#f8f8f8" />
    <path d="M261 1014h75v12h-75zM261 1050h120v12H261zM261 1086h63v12h-63z" fill="#cce6dc" />
    <path d="M346.500 1008v24M367.500 1044v24M385.500 1080v24" stroke="#bbb" strokeWidth="3" />
  </g>,
  <g key="bubbles">
    <circle cx="472" cy="1076" r="29" fill={P} /><circle cx="475" cy="1034" r="11" fill={G} /><circle cx="504" cy="1026" r="15" fill={G} /><circle cx="533" cy="1029" r="9" fill={P} />
    <circle cx="562" cy="1043" r="20" fill={Y} /><circle cx="518" cy="1059" r="17" fill={Y} /><circle cx="546" cy="1074" r="11" fill={O} /><circle cx="516" cy="1092" r="13" fill={G} />
  </g>,
];

function ShowMe() {
  return (
    <div className="z-10 -ml-px h-[556px] w-[204px] shrink-0 border border-[#d8d8d8] bg-[#fafafa] pt-[14px] pl-[13px] font-['Open_Sans'] shadow-[2px_2px_3px_rgba(0,0,0,0.25)]">
      <div className="grid grid-cols-[56px_56px_56px] gap-[4px]">
        {DRAWINGS.map((d, i) => {
          const x = 70 + (i % 3) * 180;
          const y = 30 + Math.floor(i / 3) * 138;
          return (
            <div key={i} className={`h-[42px] bg-white ${i === 13 ? "border-2 border-[#dd6b35]" : "border border-[#dedede]"}`}>
              <svg viewBox={i === 13 ? "253 585 156 114" : `${x} ${y} 162 120`} className="h-full w-full">{d}</svg>
            </div>
          );
        })}
      </div>
      <div className="mt-[16px] pl-[2px] text-[12px] text-[#222]">
        <div className="h-[20px] leading-[21px] tracking-[-0.05px]">For <b className="tracking-[-0.3px]">lines</b> (discrete) try</div>
        <div className="mt-[4px] flex h-[20px] items-center tracking-[-0.4px]">
          1 date
          <svg viewBox="0 0 12 12" className="mb-[4px] ml-[8px] h-[12px] w-[12px]" fill="none" stroke="#555"><path d="M1.500 2.500h9v8h-9zM1.500 5.500h9M3.500 1v1.500M8.500 1v1.500" /></svg>
        </div>
        <div className="mt-[2px] flex h-[22px] items-center whitespace-nowrap"><span className="w-[57px] pt-[2px] tracking-[-0.15px]">0 or more</span><Pill text="Dimensions" className="-mt-[1px] w-[90px] justify-center" /></div>
        <div className="mt-[6px] flex h-[22px] items-center whitespace-nowrap"><span className="w-[54px] pt-[2px] tracking-[-0.35px]">1 or more</span><Pill green text="Measures" className="-mt-[1px] w-[79px] justify-center" /></div>
      </div>
    </div>
  );
}

/* ---------- sheet tabs and status bar ---------- */

function SheetTab({ name, className, icon = true }: { name: string; className: string; icon?: boolean }) {
  return (
    <div className={`flex shrink-0 items-center border-r border-[#cacaca] whitespace-nowrap ${className}`}>
      {icon && (
        <svg viewBox="0 0 12 12" className="mr-[5px] ml-[7px] h-[12px] w-[12px]" fill="none" stroke="#666"><path d="M.5.500h11v11H.5zM6 .5v11M.5 6h11" /></svg>
      )}
      {name}
    </div>
  );
}

function PlusBadge() {
  return <path d="M13 9v8M9 13h8" strokeWidth="2" />;
}

function SheetTabs() {
  return (
    <div className="z-10 flex h-[31px] shrink-0 border-t border-b border-[#cacaca] bg-[#e6e6e6] font-['Open_Sans'] text-[12px] text-[#666]">
      <div className="flex w-[131px] shrink-0 items-center border-r border-[#cacaca] pl-[8px]">
        <Cylinder className="h-[13px] w-[12px]" /><span className="ml-[4px]">Data Source</span>
      </div>
      <SheetTab name="Overview" className="w-[85px] tracking-[-0.15px]" />
      <SheetTab name="Product" className="w-[77px]" />
      <SheetTab name="Customers" className="w-[94px]" />
      <SheetTab name="Shipping" className="w-[82px]" />
      <div className="flex h-[30px] w-[87px] shrink-0 items-center justify-center border-r border-[#cacaca] bg-white text-[12px] font-bold tracking-[-0.35px] text-[#333]">Performance</div>
      <SheetTab name="Commission Model" className="w-[141px] tracking-[-0.08px]" />
      <SheetTab name="Order Details" className="w-[106px] tracking-[-0.1px]" />
      <SheetTab name="Forecast" className="w-[63px] justify-center" icon={false} />
      <SheetTab name="What If Forecast" className="w-[109px] pl-[6px]" icon={false} />
      <div className="flex w-[32px] shrink-0 items-center justify-center border-r border-[#cacaca]">
        <Ico className="h-[17px] w-[17px]"><path d="M9 12.500H1.500v-10h10V8M4.500 10V8M6.500 10V5M8.500 9V7" /><PlusBadge /></Ico>
      </div>
      <div className="flex w-[32px] shrink-0 items-center justify-center border-r border-[#cacaca]">
        <Ico className="h-[17px] w-[17px]"><path d="M9 12.500H1.500v-10h11V8M7 2.500v10M1.500 7.500h11" /><PlusBadge /></Ico>
      </div>
      <div className="flex w-[32px] shrink-0 items-center justify-center border-r border-[#cacaca]">
        <Ico className="h-[17px] w-[17px]"><path d="M7 13.500l-5.500-2v-9L7 4.500zM7 4.500l5.500-2V8" strokeWidth="1.200" /><PlusBadge /></Ico>
      </div>
    </div>
  );
}

function StatusBar() {
  return (
    <div className="flex h-[20px] shrink-0 items-center bg-[#ebebeb] pl-[3px] font-['Open_Sans'] text-[11px] whitespace-nowrap text-[#333]">
      <span className="w-[71px]">428 marks</span>
      <span className="w-[132px]">144 rows by 3 columns</span>
      <span className="w-[793px] tracking-[0.27px]">SUM(Sales): $2,326,534</span>
      <div className="h-full w-[127px] border-l border-[#cacaca]" />
      <div className="h-full w-[27px] border-l border-[#cacaca]" />
      <div className="h-full w-[27px] border-l border-[#cacaca]" />
      <div className="h-full w-[47px] border-l border-[#cacaca]" />
      <div className="flex h-full w-[71px] items-center border-l border-[#cacaca] pl-[8px]">
        <svg viewBox="0 0 56 8" className="h-[8px] w-[56px]" fill="#b4b4b4"><path d="M0 0h1.500v8H0zM6.500 0v8L2 4zM21.500 0v8L17 4zM33 0v8l4.500-4zM48 0v8l4.500-4zM53 0h1.500v8H53z" /></svg>
      </div>
      <div className="flex h-full flex-1 items-center border-l border-[#cacaca] pl-[8px]">
        <svg viewBox="0 0 54 11" className="h-[11px] w-[54px]" fill="#b4b4b4">
          <path d="M0 0h3v3H0zM4 0h3v3H4zM8 0h3v3H8zM0 4h3v3H0zM4 4h3v3H4zM8 4h3v3H8zM0 8h3v3H0zM4 8h3v3H4zM8 8h3v3H8zM21 0h11v6H21zM21 8h3v3h-3zM25 8h3v3h-3zM29 8h3v3h-3z" />
          <path d="M42 0h11v11H42z" fill="#555" />
        </svg>
      </div>
    </div>
  );
}

/* ---------- taskbar ---------- */

function Taskbar() {
  return (
    <div className="flex h-[40px] shrink-0 items-center bg-linear-to-r from-[#161e20] via-[#1c2224] to-[#090b0c] text-white">
      <div className="flex h-full w-[48px] shrink-0 items-center justify-center bg-[#1f2829]">
        <svg viewBox="0 0 16 16" className="h-[16px] w-[16px]" fill="#fff"><path d="M0 2.300l6.800-.9v6.100H0zM7.600 1.300L16 .1v7.400H7.600zM0 8.300h6.800v6.200L0 13.600zM7.600 8.300H16v7.600l-8.400-1.200z" /></svg>
      </div>
      <div className="flex h-full w-[338px] shrink-0 items-center bg-[#333]">
        <span className="ml-[9px] h-[22px] w-[22px] rounded-full border-[3px] border-white" />
        <span className="ml-[9px] text-[15px] tracking-[-0.3px] text-[#b0b0b0]">Type here to search</span>
        <svg viewBox="0 0 12 18" className="ml-auto mr-[9px] h-[17px] w-[12px]" fill="none" stroke="#ccc"><rect x="4" y=".5" width="4" height="10" rx="2" /><path d="M1.500 7v2c0 6 9 6 9 0V7M6 13.500V17" /></svg>
      </div>
      <svg viewBox="0 0 20 18" className="ml-[21px] h-[16px] w-[19px] shrink-0" fill="none" stroke="#fff" strokeWidth="1.200"><path d="M2 .5v2.500h11V.5M2.500 6.500h10v5h-10zM2 17.500V15h11v2.500M17.500 0v18M16 7h3v3h-3z" /></svg>
      <svg viewBox="0 0 22 22" className="ml-[30px] h-[22px] w-[22px] shrink-0" fill="#0b84dd"><path d="M.8 10C2 3.500 7 .5 11.500.5c6 0 9.700 4.300 9.700 9.500v2.500H7.500c.2 5 6.500 6.500 12 3.500v4.300C12 24 4 20.500 4 13.500 4 10.500 5.500 8 8 6.800 5 7 2.500 8 .8 10zM7.700 8.700h7.500c0-5.200-6.700-5-7.500 0z" /></svg>
      <svg viewBox="0 0 22 20" className="ml-[27px] h-[20px] w-[22px] shrink-0"><path d="M0 1h8l2 2.500h12V18H0z" fill="#f5bc42" /><path d="M1 6h20v12H1z" fill="#ffe089" /><path d="M4 19v-7h14v7h-4v-3H8v3z" fill="#3f9be0" /></svg>
      <svg viewBox="0 0 22 22" className="ml-[26px] h-[24px] w-[22px] shrink-0"><path d="M1 6h20v15H1z" fill="#fff" /><path d="M7 6V2.500h8V6" stroke="#fff" strokeWidth="1.500" fill="none" /><path d="M6 9h4.500v4H6z" fill="#e74f27" /><path d="M11.500 9H16v4h-4.500z" fill="#7eb51a" /><path d="M6 14h4.500v4H6z" fill="#1fa2e8" /><path d="M11.500 14H16v4h-4.500z" fill="#f7b300" /></svg>
      <svg viewBox="0 0 24 20" className="ml-[27px] h-[22px] w-[24px] shrink-0"><path d="M0 7l12-7 12 7v13H0z" fill="#1372c4" /><path d="M2 7h20l-10 8z" fill="#fff" /><path d="M0 7l12 8 12-8v13H0z" fill="#2da0ef" /><path d="M0 20l9-8M24 20l-9-8" stroke="#1680d4" /></svg>
      <svg viewBox="0 0 24 24" className="ml-[25px] h-[24px] w-[24px] shrink-0"><circle cx="12" cy="12" r="11" fill="#fbc316" /><path d="M2.500 6.500A11 11 0 0 1 21.500 6.500H12L7 14.500z" fill="#e84335" /><path d="M2.500 6.500A11 11 0 0 0 11.500 23l5-8.500L7.500 15z" fill="#33a852" /><circle cx="12" cy="12" r="5.300" fill="#fff" /><circle cx="12" cy="12" r="4.200" fill="#4285f4" /></svg>
      <div className="ml-[13px] flex h-full w-[47px] shrink-0 items-center justify-center border-b-2 border-[#d9a0e0] bg-[#464c4e]">
        <div className="flex h-[24px] w-[24px] items-center justify-center bg-[#f4f6f7]"><TableauLogo className="h-[22px] w-[22px]" mono="#346b88" /></div>
      </div>
      <svg viewBox="0 0 16 18" className="ml-[320px] h-[17px] w-[16px] shrink-0" fill="none" stroke="#fff" strokeWidth="1.200"><circle cx="5" cy="9" r="2.700" /><path d="M1 16.500c0-6 8-6 8 0" /><circle cx="11" cy="4" r="2.700" /><path d="M8.500 8.500C11 6 15 7 15 11.500" /></svg>
      <svg viewBox="0 0 12 7" className="ml-[22px] h-[7px] w-[12px] shrink-0" fill="none" stroke="#fff" strokeWidth="1.300"><path d="M.5 6L6 1l5.500 5" /></svg>
      <svg viewBox="0 0 14 14" className="ml-[12px] h-[13px] w-[13px] shrink-0" fill="none" stroke="#fff" strokeWidth="1.200"><path d="M1 11.500C2 5 7 1.500 13.500 1.500M4 12.500C4.500 8 8 5 13.500 5M7 13c.5-3 2.500-5 6.500-5" /><circle cx="11.500" cy="12" r="1.500" fill="#fff" stroke="none" /></svg>
      <svg viewBox="0 0 15 10" className="ml-[9px] h-[10px] w-[15px] shrink-0" fill="none" stroke="#fff"><path d="M.5.500h13v9H.5zM14.500 3v4" strokeWidth="1.200" /><path d="M2 2h3v6H2z" fill="#fff" stroke="none" /></svg>
      <svg viewBox="0 0 17 15" className="ml-[8px] h-[14px] w-[17px] shrink-0"><path d="M0 7c0-3 3-3 4-3 1-4 8-4 8 1 4 0 4 5 1 6H2C0 10 0 8 0 7z" fill="#bbb" /><circle cx="12" cy="10" r="4.500" fill="#2482d0" /><path d="M9.700 9.500c1-2 3.500-2 4.500 0M9.700 11c1 2 3.500 2 4.500 0" stroke="#fff" fill="none" /></svg>
      <svg viewBox="0 0 17 14" className="ml-[8px] h-[14px] w-[17px] shrink-0" fill="none" stroke="#fff"><path d="M.5 5h3L7 1.500v11L3.500 9h-3zM9 5c1 1 1 3 0 4M11.500 3c2 2 2 6 0 8M14 1.500c3 3 3 8 0 11" /></svg>
      <span className="ml-[9px] w-[24px] shrink-0 text-[12px] tracking-[-0.4px]">ENG</span>
      <div className="ml-[10px] w-[62px] shrink-0 text-center text-[12px] leading-[18px] tracking-[-0.45px] whitespace-nowrap"><div>11:42</div><div>16-10-2023</div></div>
      <svg viewBox="0 0 26 26" className="ml-[16px] h-[26px] w-[26px] shrink-0"><path d="M1 1h16v12h-9l-3 3.500V13H1z" fill="#fff" /><path d="M3.500 4h11M3.500 7h11M3.500 10h6" stroke="#222" /><circle cx="16.500" cy="16.500" r="7.500" fill="#333" stroke="#888" /><text x="16.500" y="20.500" fontSize="11" fill="#fff" textAnchor="middle">2</text></svg>
      <div className="ml-auto h-full w-[5px] border-l border-[#666]" />
    </div>
  );
}

export default function App() {
  return (
    <div className="relative flex h-[768px] w-[1366px] flex-col overflow-hidden bg-[#f5f5f5] font-['Noto_Sans',sans-serif]">
      <TitleBar />
      <MenuBar />
      <Toolbar />
      <div className="flex h-[593px] shrink-0 items-stretch">
        <DataPane />
        <Cards />
        <Worksheet />
        <ShowMe />
      </div>
      <SheetTabs />
      <StatusBar />
      <Taskbar />
      <div className="pointer-events-none absolute top-[650px] left-[1073px] z-30 whitespace-nowrap text-[#b4b4b4]">
        <div className="text-[19px] leading-[24px]">Activate Windows</div>
        <div className="text-[14px] leading-[22px] tracking-[0.12px]">Go to Settings to activate Windows.</div>
      </div>
    </div>
  );
}
